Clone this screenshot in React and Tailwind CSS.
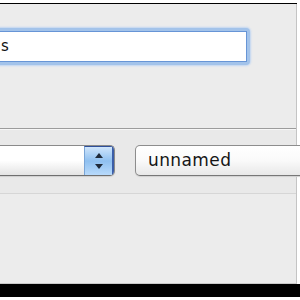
import React from "react";

const font = { fontFamily: '"DejaVu Sans", "Liberation Sans", sans-serif' };

const Stepper = () => (
  <svg width="10" height="20" viewBox="0 0 10 20" className="block">
    <path d="M5 2 L9 7 L1 7 Z" fill="#1f2a3a" />
    <path d="M5 18 L9 13 L1 13 Z" fill="#1f2a3a" />
  </svg>
);

export default function App() {
  return (
    <div className="w-[300px] h-[300px] bg-white overflow-hidden flex flex-col" style={font}>
      {/* top edge */}
      <div className="h-[3px] bg-white" />
      <div className="h-[1px] w-[297px] bg-black" />

      {/* window body */}
      <div className="flex flex-col w-[297px] h-[280px] bg-[#ececec] border-r border-[#c4c4c4]">
        {/* name field */}
        <div className="pt-[24px]">
          <div className="-ml-[6px] w-[256px] h-[37px] rounded-[4px] bg-[#a3c3ea] p-[3px] shadow-[0_0_2px_1px_#c0d6f2]">
            <div className="h-full w-full bg-white border border-[#6795d6] flex items-center pl-[3px] text-[15px] text-[#111] leading-none">
              s
            </div>
          </div>
        </div>

        {/* options strip */}
        <div className="mt-[63px] border-t border-[#9c9c9c]">
          <div className="h-[64px] bg-[#e9e9e9] border-t border-[#f7f7f7] flex items-center gap-[20px] pb-[2px]">
            {/* popup button */}
            <div className="-ml-[6px] flex h-[31px] w-[121px] rounded-[5px] border border-[#8a8a8a] border-b-[#6f6f6f] overflow-hidden shadow-[0_1px_1px_#cfcfcf]">
              <div className="flex-1 bg-gradient-to-b from-white via-white to-[#e4e4e4]" />
              <div className="w-[30px] flex items-center justify-center bg-gradient-to-b from-[#cfe5fb] via-[#8fc0f0] to-[#b8dafb] border-l border-[#7aa5d6] border-t border-t-[#2f4f9a] border-r-2 border-r-[#3b5ea8]">
                <Stepper />
              </div>
            </div>

            {/* unnamed field */}
            <div className="flex items-center h-[31px] flex-1 -mr-[20px] rounded-[5px] border border-[#8d8d8d] border-b-[#777] bg-gradient-to-b from-white via-[#fafafa] to-[#e8e8e8] pl-[12px] text-[17px] text-[#151515] tracking-[0.4px] shadow-[0_1px_1px_#d0d0d0]">
              unnamed
            </div>
          </div>
          <div className="border-t border-[#d6d6d6]" />
        </div>

        <div className="flex-1 border-b border-[#c9c9c9]" />
      </div>

      {/* bottom edge */}
      <div className="h-[13px] bg-black" />
      <div className="flex-1 bg-white" />
    </div>
  );
}
